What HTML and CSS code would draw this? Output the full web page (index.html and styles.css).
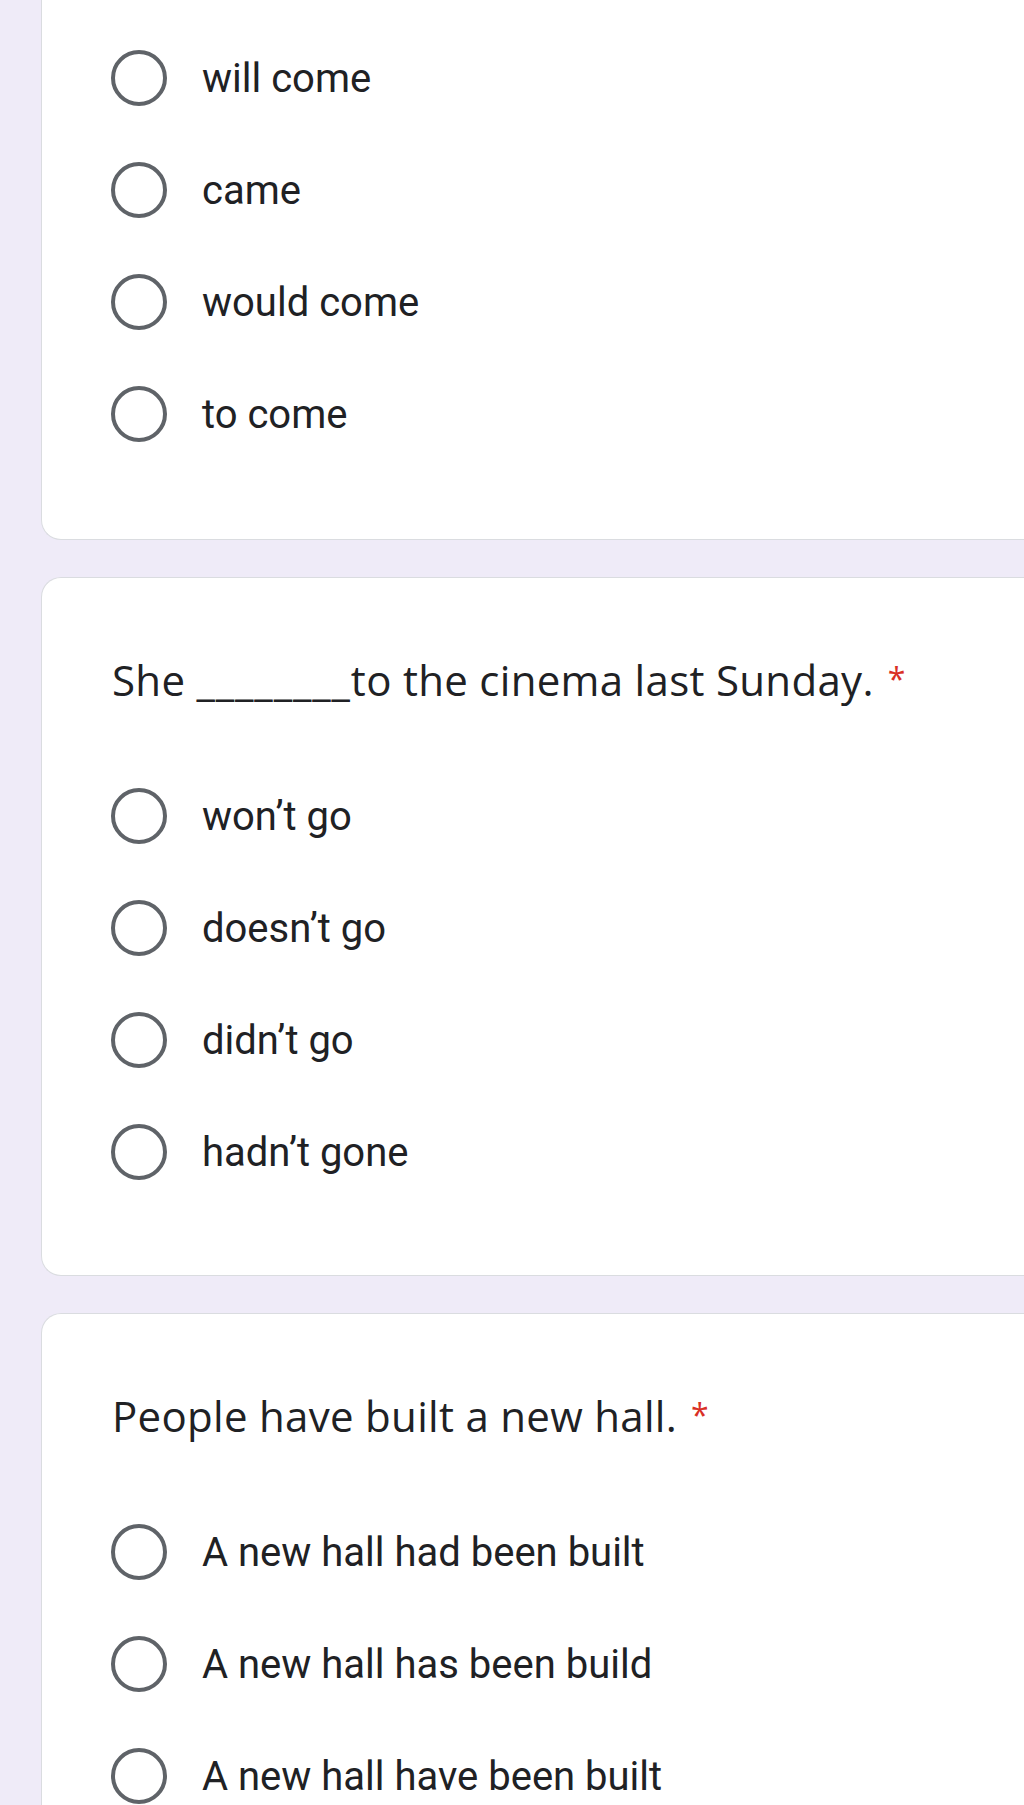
FILE: index.html
```html
<!DOCTYPE html>
<html lang="en">
<head>
<meta charset="utf-8">
<title>Form</title>
<link rel="stylesheet" href="styles.css">
</head>
<body>
<div class="page">
  <section class="card card-cut">
    <div class="options">
      <div class="option"><span class="radio"></span><span class="label">will come</span></div>
      <div class="option"><span class="radio"></span><span class="label">came</span></div>
      <div class="option"><span class="radio"></span><span class="label">would come</span></div>
      <div class="option"><span class="radio"></span><span class="label">to come</span></div>
    </div>
  </section>

  <section class="card">
    <div class="question">She <span class="blank">________</span>to the cinema last Sunday.<span class="req">*</span></div>
    <div class="options">
      <div class="option"><span class="radio"></span><span class="label">won’t go</span></div>
      <div class="option"><span class="radio"></span><span class="label">doesn’t go</span></div>
      <div class="option"><span class="radio"></span><span class="label">didn’t go</span></div>
      <div class="option"><span class="radio"></span><span class="label">hadn’t gone</span></div>
    </div>
  </section>

  <section class="card">
    <div class="question">People have built a new hall.<span class="req">*</span></div>
    <div class="options">
      <div class="option"><span class="radio"></span><span class="label">A new hall had been built</span></div>
      <div class="option"><span class="radio"></span><span class="label">A new hall has been build</span></div>
      <div class="option"><span class="radio"></span><span class="label">A new hall have been built</span></div>
    </div>
  </section>
</div>
</body>
</html>
```

FILE: styles.css
```css
html, body {
  margin: 0;
  padding: 0;
}
body {
  background: #efebf8;
  overflow: hidden;
}
.page {
  display: flex;
  flex-direction: column;
  gap: 37px;
  padding-left: 41px;
}
.card {
  background: #ffffff;
  border: 1px solid #dadce0;
  border-right: none;
  border-radius: 20px 0 0 20px;
  margin-right: -40px;
  padding: 73px 0 67px 69px;
}
.card-cut {
  border-top: none;
  border-radius: 0 0 0 20px;
  padding-top: 22px;
  padding-bottom: 69px;
}
.question {
  font-family: "Open Sans", "Liberation Sans", sans-serif;
  font-size: 42px;
  line-height: 56px;
  color: #202124;
  margin-left: 1px;
  margin-bottom: 52px;
  letter-spacing: 0.3px;
}
.blank {
  letter-spacing: 0.9px;
}
.req {
  color: #d93025;
  margin-left: 14px;
  font-size: 32px;
  vertical-align: 5px;
}
.options {
  display: flex;
  flex-direction: column;
}
.option {
  display: flex;
  align-items: center;
  height: 112px;
}
.radio {
  box-sizing: border-box;
  width: 56px;
  height: 56px;
  border: 4.5px solid #5f6368;
  border-radius: 50%;
  flex: none;
}
.label {
  margin-left: 35px;
  font-family: Roboto, "Liberation Sans", sans-serif;
  font-size: 40px;
  color: #202124;
}
```
